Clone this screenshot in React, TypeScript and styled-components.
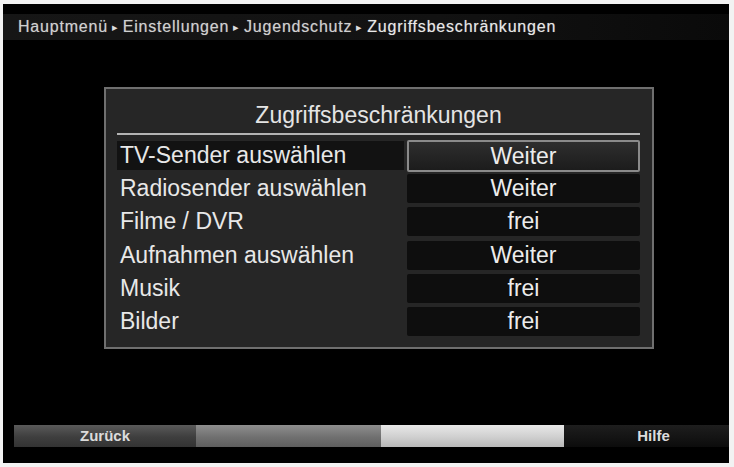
import React from 'react';
import styled, { createGlobalStyle } from 'styled-components'

const GlobalStyle = createGlobalStyle`
  html, body {
    margin: 0;
    padding: 0;
    background: #f2f2f2;
  }
  body {
    font-family: "Liberation Sans", Arial, sans-serif;
  }
`

interface RowData {
  label: string,
  value: string,
}

const rows: RowData[] = [
  { label: 'TV-Sender auswählen', value: 'Weiter' },
  { label: 'Radiosender auswählen', value: 'Weiter' },
  { label: 'Filme / DVR', value: 'frei' },
  { label: 'Aufnahmen auswählen', value: 'Weiter' },
  { label: 'Musik', value: 'frei' },
  { label: 'Bilder', value: 'frei' },
]

const crumbs = ['Hauptmenü', 'Einstellungen', 'Jugendschutz', 'Zugriffsbeschränkungen']

const App: React.FC = () => {
  return (
    <>
      <GlobalStyle />
      <Page>
        <Screen>
          <Breadcrumb>
            {crumbs.map((c, i) => (
              <React.Fragment key={c}>
                {i > 0 && <Arrow>▸</Arrow>}
                <Crumb $last={i === crumbs.length - 1}>{c}</Crumb>
              </React.Fragment>
            ))}
          </Breadcrumb>

          <Middle>
            <Panel>
              <PanelTitle>Zugriffsbeschränkungen</PanelTitle>
              <Separator />
              <RowList>
                {rows.map(({ label, value }, i) => (
                  <Row key={label}>
                    <Label $active={i === 0}>{label}</Label>
                    <Value $selected={i === 0}>{value}</Value>
                  </Row>
                ))}
              </RowList>
            </Panel>
          </Middle>

          <Footer>
            <FooterKey $tone="dark">Zurück</FooterKey>
            <FooterKey $tone="mid" />
            <FooterKey $tone="light" />
            <FooterKey $tone="black">Hilfe</FooterKey>
          </Footer>
        </Screen>
      </Page>
    </>
  )
}

const Page = styled.div`
  width: 734px;
  height: 467px;
  padding: 4px 5px 4px 3px;
  box-sizing: border-box;
`

const Screen = styled.div`
  width: 100%;
  height: 100%;
  background: #000;
  display: flex;
  flex-direction: column;
  overflow: hidden;
`

const Breadcrumb = styled.div`
  display: flex;
  align-items: center;
  height: 26px;
  margin-top: 10px;
  padding-left: 15px;
  background: linear-gradient(90deg, #161616 0%, #121212 60%, #0a0a0a 100%);
  color: #d8d8d8;
  font-size: 16px;
  letter-spacing: 0.8px;
  white-space: nowrap;
`

const Crumb = styled.span<{ $last: boolean }>`
  color: ${p => (p.$last ? '#e8e8e8' : '#d0d0d0')};
  text-shadow: 0 0 1px rgba(255, 255, 255, 0.4);
`

const Arrow = styled.span`
  font-size: 11px;
  margin: 0 4px;
  color: #ddd;
`

const Middle = styled.div`
  flex: 1;
  padding: 47px 0 0 101px;
`

const Panel = styled.div`
  width: 550px;
  height: 262px;
  box-sizing: border-box;
  background: #262626;
  border: 2px solid #6f6f6f;
  padding: 0 12px 0 11px;
`

const PanelTitle = styled.div`
  text-align: center;
  color: #e4e4e4;
  font-size: 23px;
  height: 36px;
  line-height: 36px;
  padding-top: 8px;
`

const Separator = styled.div`
  height: 2px;
  background: #b4b4b4;
  margin-bottom: 4px;
`

const RowList = styled.div`
  display: flex;
  flex-direction: column;
`

const Row = styled.div`
  display: flex;
  height: 33.2px;
  align-items: center;
`

const Label = styled.div<{ $active: boolean }>`
  width: 284px;
  margin-right: 3px;
  height: 29px;
  line-height: 29px;
  padding-left: 3px;
  color: #e8e8e8;
  font-size: 23px;
  background: ${p => (p.$active ? '#121212' : 'transparent')};
`

const Value = styled.div<{ $selected: boolean }>`
  flex: 1;
  height: ${p => (p.$selected ? '32px' : '29px')};
  box-sizing: border-box;
  text-align: center;
  line-height: ${p => (p.$selected ? '28px' : '29px')};
  color: #ececec;
  font-size: 23px;
  background: ${p => (p.$selected
    ? 'linear-gradient(180deg, #2e2e2e 0%, #1c1c1c 100%)'
    : '#0e0e0e')};
  border: ${p => (p.$selected ? '2px solid #8a8a8a' : 'none')};
  border-radius: 2px;
`

type Tone = 'dark' | 'mid' | 'light' | 'black'

const toneBg: Record<Tone, string> = {
  dark: 'linear-gradient(180deg, #5a5a5a 0%, #3e3e3e 55%, #333 100%)',
  mid: 'linear-gradient(180deg, #8e8e8e 0%, #707070 55%, #5e5e5e 100%)',
  light: 'linear-gradient(180deg, #e8e8e8 0%, #cfcfcf 55%, #b8b8b8 100%)',
  black: 'linear-gradient(180deg, #1e1e1e 0%, #141414 55%, #0c0c0c 100%)',
}

const Footer = styled.div`
  display: grid;
  grid-template-columns: 182px 185px 183px 1fr;
  height: 22px;
  margin: 0 0 16px 11px;
`

const FooterKey = styled.div<{ $tone: Tone }>`
  background: ${p => toneBg[p.$tone]};
  color: #dcdcdc;
  font-size: 15px;
  font-weight: 700;
  line-height: 22px;
  text-align: center;
  padding-left: ${p => (p.$tone === 'black' ? '14px' : '0')};
`

export default App;
